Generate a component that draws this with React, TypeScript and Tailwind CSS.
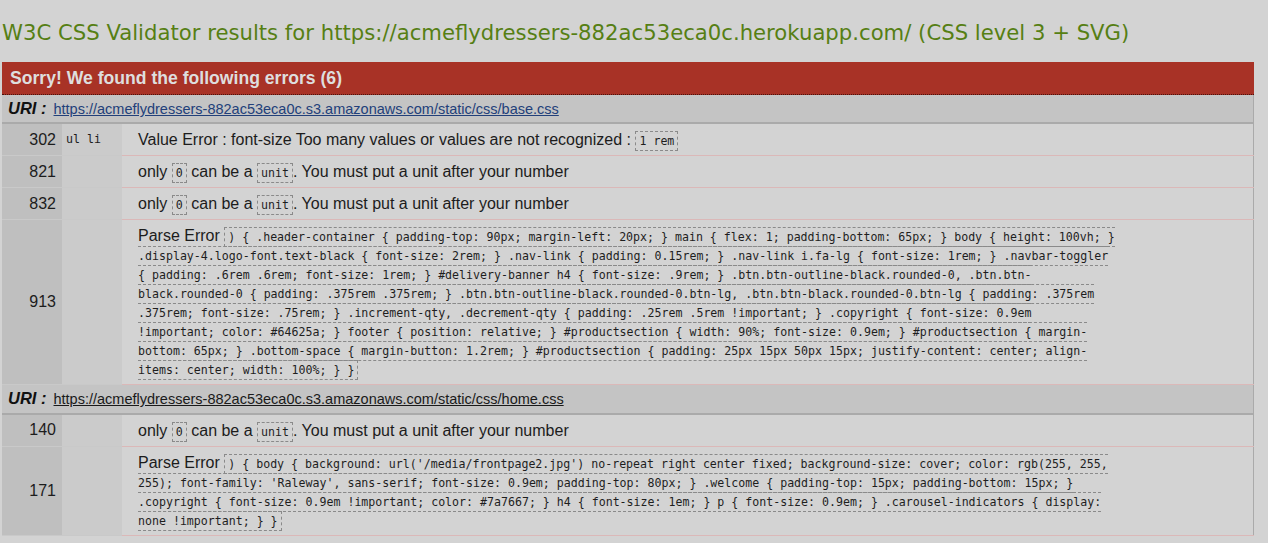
import React from "react";

const mono = "font-['DejaVu_Sans_Mono',monospace] text-[11.6px]";

function Code({ lines }: { lines: string[] }) {
  return (
    <span className={`${mono} leading-[14px] border border-dashed border-[#8a8a8a] px-[3px] py-[2px] text-[#1e1e1e]`}>
      {lines.map((l, i) => (
        <React.Fragment key={i}>
          {l}
          {i < lines.length - 1 && <br />}
        </React.Fragment>
      ))}
    </span>
  );
}

function Unit() {
  return (
    <>
      only <Code lines={["0"]} /> can be a <Code lines={["unit"]} />. You must put a unit after your number
    </>
  );
}

function Row({
  line,
  ctx,
  children,
}: {
  line: string;
  ctx?: string;
  children: React.ReactNode;
}) {
  return (
    <tr>
      <td className="w-[60px] bg-[#bfbfbf] border-b border-[#c9c9c9] pr-[6px] text-right align-middle text-[16px] text-[#1c1c1c]">
        {line}
      </td>
      <td className={`w-[60px] bg-[#cbcbcb] border-b border-[#c9c9c9] pl-[4px] align-middle text-[#1c1c1c] ${mono}`}>
        {ctx}
      </td>
      <td className="bg-[#d3d3d3] border-b border-[#dbb8b8] pl-[16px] pr-[8px] pt-[6px] pb-[6px] align-middle text-[16px] leading-[19px] text-[#1c1c1c] whitespace-nowrap">
        {children}
      </td>
    </tr>
  );
}

function Uri({ href, color, h }: { href: string; color: string; h: string }) {
  return (
    <tr>
      <td colSpan={3} className={`bg-[#c4c4c4] border-b-2 border-[#aaaaaa] pl-[6px] pr-[8px] ${h} align-middle text-[14.5px]`}>
        <span className="font-bold italic text-[16.5px] text-[#111] mr-[7px]">URI :</span>
        <span className={`underline ${color}`}>{href}</span>
      </td>
    </tr>
  );
}

export default function App() {
  return (
    <div className="min-h-[543px] w-full bg-[#d3d3d3] font-['Liberation_Sans',Arial,sans-serif] overflow-hidden">
      <h2 className="pt-[20px] pl-[2px] h-[62px] font-['DejaVu_Sans',Verdana,sans-serif] text-[21.2px] leading-[26px] text-[#567f14] whitespace-nowrap">
        W3C CSS Validator results for https://acmeflydressers-882ac53eca0c.herokuapp.com/ (CSS level 3 + SVG)
      </h2>
      <div className="ml-[2px] w-[1252px]">
        <div className="h-[33px] bg-[#a83226] border-b border-dotted border-[#4a120c] pl-[8px] flex items-center text-[17.6px] font-bold text-[#dedede]">
          Sorry! We found the following errors (6)
        </div>
        <table className="w-full border-collapse border-r border-[#aaaaaa]">
          <tbody>
            <Uri h="h-[28px]" href="https://acmeflydressers-882ac53eca0c.s3.amazonaws.com/static/css/base.css" color="text-[#22407a]" />
            <Row line="302" ctx="ul li">
              Value Error : font-size Too many values or values are not recognized : <Code lines={["1 rem"]} />
            </Row>
            <Row line="821">
              <Unit />
            </Row>
            <Row line="832">
              <Unit />
            </Row>
            <Row line="913">
              Parse Error{" "}
              <Code
                lines={[
                  ") { .header-container { padding-top: 90px; margin-left: 20px; } main { flex: 1; padding-bottom: 65px; } body { height: 100vh; }",
                  ".display-4.logo-font.text-black { font-size: 2rem; } .nav-link { padding: 0.15rem; } .nav-link i.fa-lg { font-size: 1rem; } .navbar-toggler",
                  "{ padding: .6rem .6rem; font-size: 1rem; } #delivery-banner h4 { font-size: .9rem; } .btn.btn-outline-black.rounded-0, .btn.btn-",
                  "black.rounded-0 { padding: .375rem .375rem; } .btn.btn-outline-black.rounded-0.btn-lg, .btn.btn-black.rounded-0.btn-lg { padding: .375rem",
                  ".375rem; font-size: .75rem; } .increment-qty, .decrement-qty { padding: .25rem .5rem !important; } .copyright { font-size: 0.9em",
                  "!important; color: #64625a; } footer { position: relative; } #productsection { width: 90%; font-size: 0.9em; } #productsection { margin-",
                  "bottom: 65px; } .bottom-space { margin-button: 1.2rem; } #productsection { padding: 25px 15px 50px 15px; justify-content: center; align-",
                  "items: center; width: 100%; } }",
                ]}
              />
            </Row>
            <Uri h="h-[29px]" href="https://acmeflydressers-882ac53eca0c.s3.amazonaws.com/static/css/home.css" color="text-[#1a1a1a]" />
            <Row line="140">
              <Unit />
            </Row>
            <Row line="171">
              Parse Error{" "}
              <Code
                lines={[
                  ") { body { background: url('/media/frontpage2.jpg') no-repeat right center fixed; background-size: cover; color: rgb(255, 255,",
                  "255); font-family: 'Raleway', sans-serif; font-size: 0.9em; padding-top: 80px; } .welcome { padding-top: 15px; padding-bottom: 15px; }",
                  ".copyright { font-size: 0.9em !important; color: #7a7667; } h4 { font-size: 1em; } p { font-size: 0.9em; } .carousel-indicators { display:",
                  "none !important; } }",
                ]}
              />
            </Row>
          </tbody>
        </table>
      </div>
    </div>
  );
}
